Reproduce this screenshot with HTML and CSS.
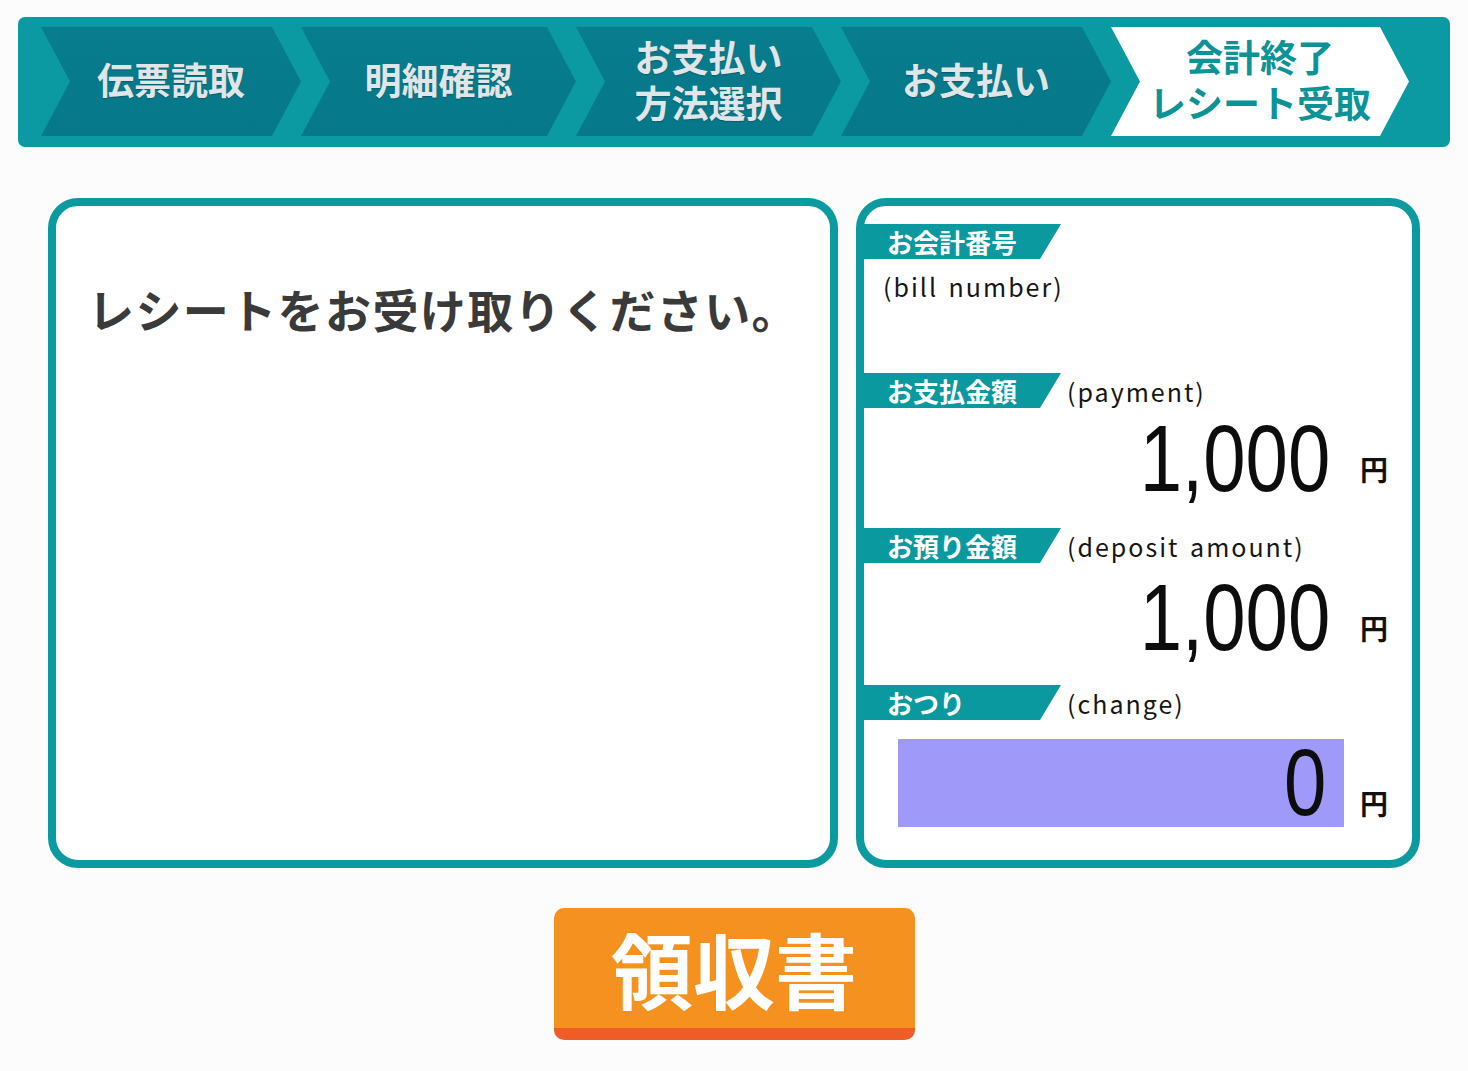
FILE: index.html
```html
<!DOCTYPE html>
<html lang="ja">
<head>
<meta charset="utf-8">
<title>レシート受取</title>
<link rel="stylesheet" href="styles.css">
</head>
<body>
<div class="steps">
  <div class="step w1"><span>伝票読取</span></div>
  <div class="step w2"><span>明細確認</span></div>
  <div class="step w3"><span>お支払い<br>方法選択</span></div>
  <div class="step w4"><span>お支払い</span></div>
  <div class="step w5 current"><span>会計終了<br>レシート受取</span></div>
</div>

<div class="main">
  <div class="panel left">
    <p class="message">レシートをお受け取りください。</p>
  </div>
  <div class="panel right">
    <div class="sec sec1">
      <div class="tag">お会計番号</div>
      <div class="en en-below">(bill number)</div>
    </div>
    <div class="sec sec2">
      <div class="head"><div class="tag">お支払金額</div><span class="en">(payment)</span></div>
      <div class="amount a2"><span class="num">1,000</span><span class="yen">円</span></div>
    </div>
    <div class="sec sec3">
      <div class="head"><div class="tag">お預り金額</div><span class="en">(deposit amount)</span></div>
      <div class="amount a3"><span class="num">1,000</span><span class="yen">円</span></div>
    </div>
    <div class="sec sec4">
      <div class="head"><div class="tag">おつり</div><span class="en">(change)</span></div>
      <div class="change-row">
        <div class="change-box"><span class="num">0</span></div>
        <span class="yen yen-change">円</span>
      </div>
    </div>
  </div>
</div>

<div class="btn-wrap">
  <button class="receipt-btn">領収書</button>
</div>
</body>
</html>
```

FILE: styles.css
```css
html, body {
  margin: 0;
  padding: 0;
  background: #fcfcfc;
  font-family: "Noto Sans CJK JP", "Noto Sans", sans-serif;
}

.steps {
  margin: 17px 18px 0;
  height: 130px;
  box-sizing: border-box;
  padding: 10px 41px 11px 23px;
  background: #0b9aa1;
  border-radius: 7px;
  display: flex;
}

.step {
  flex: none;
  height: 109px;
  clip-path: polygon(0 0, calc(100% - 29px) 0, 100% 50%, calc(100% - 29px) 100%, 0 100%, 29px 50%);
  background: linear-gradient(180deg, #077d8d 0%, #06788a 100%);
  display: flex;
  align-items: center;
  justify-content: center;
  text-align: center;
  color: #e0e5e7;
  font-weight: 700;
  font-size: 37px;
  line-height: 46px;
}

.step span {
  padding-bottom: 6px;
  text-shadow: 0 1px 1px rgba(0, 40, 50, 0.35);
}

.w1 { width: 260px; }
.w2 { width: 275px; }
.w3 { width: 265px; }
.w4 { width: 270px; }
.w5 { width: 298px; }

.step.current {
  background: #ffffff;
  color: #0b9398;
}

.step.current span {
  text-shadow: none;
}

.main {
  display: flex;
  gap: 18px;
  margin: 51px 0 0 48px;
}

.panel {
  border: 8px solid #0a9aa0;
  border-radius: 30px;
  background: #ffffff;
  height: 670px;
  box-sizing: border-box;
}

.left {
  width: 790px;
  padding: 79px 0 0 32px;
}

.message {
  margin: 0;
  font-size: 46px;
  line-height: 46px;
  font-weight: 700;
  letter-spacing: 1.4px;
  color: #3a3a3a;
  white-space: nowrap;
}

.right {
  width: 564px;
  padding-top: 18px;
}

.sec1 { height: 149px; }
.sec2 { height: 155px; }
.sec3 { height: 157px; }

.head {
  display: flex;
  align-items: center;
  height: 35px;
}

.tag {
  width: 174px;
  height: 35px;
  padding-left: 23px;
  background: #0a999f;
  clip-path: polygon(0 0, 100% 0, calc(100% - 21px) 100%, 0 100%);
  color: #ffffff;
  font-size: 26px;
  font-weight: 700;
  line-height: 35px;
  flex: none;
}

.en {
  font-size: 25px;
  line-height: 36px;
  color: #151515;
  letter-spacing: 2px;
  word-spacing: 3px;
  margin-left: 6px;
}

.en-below {
  display: block;
  margin: 9px 0 0 19px;
}

.amount {
  text-align: right;
  padding-right: 24px;
  line-height: 94px;
  height: 94px;
  white-space: nowrap;
}

.a2 { margin-top: 4px; }
.a3 { margin-top: 8px; }

.num {
  display: inline-block;
  font-family: "Liberation Sans", Arial, sans-serif;
  font-size: 94px;
  line-height: 94px;
  color: #0d0d0d;
  transform: scaleX(0.81);
  transform-origin: right center;
}

.yen {
  display: inline-block;
  margin-left: 30px;
  font-size: 28px;
  font-weight: 700;
  color: #111111;
  vertical-align: 10px;
}

.change-row {
  display: flex;
  align-items: baseline;
  margin-top: 19px;
  padding-left: 34px;
}

.change-box {
  width: 446px;
  height: 88px;
  box-sizing: border-box;
  background: #9f99fa;
  text-align: right;
  padding-right: 18px;
  line-height: 88px;
}

.change-box .num {
  line-height: 88px;
}

.yen-change {
  margin-left: 16px;
  vertical-align: 0;
}

.btn-wrap {
  display: flex;
  justify-content: center;
  margin-top: 40px;
}

.receipt-btn {
  width: 361px;
  height: 132px;
  box-sizing: border-box;
  border: none;
  border-bottom: 12px solid #ef5d26;
  border-radius: 10px;
  background: #f5921f;
  color: #ffffff;
  font-family: "Noto Sans CJK JP", sans-serif;
  font-size: 82px;
  font-weight: 700;
  line-height: 116px;
  padding: 0;
  letter-spacing: 0;
}
```
